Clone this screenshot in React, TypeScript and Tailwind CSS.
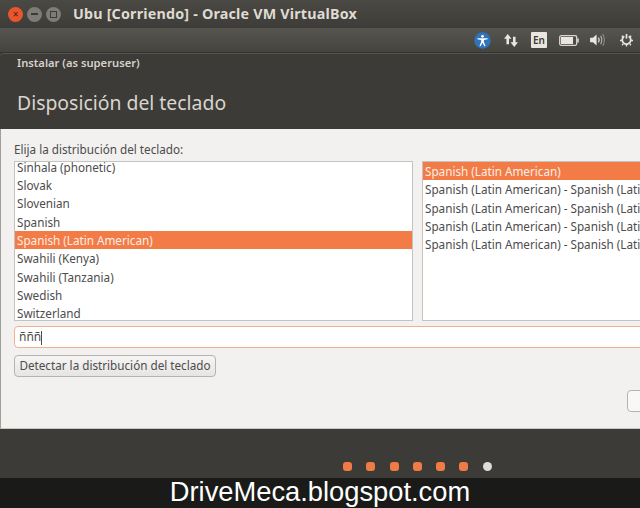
import React from 'react';

const font = { fontFamily: '"Noto Sans", "Open Sans", sans-serif' };

const layouts = ['Sinhala (phonetic)', 'Slovak', 'Slovenian', 'Spanish', 'Spanish (Latin American)', 'Swahili (Kenya)', 'Swahili (Tanzania)', 'Swedish', 'Switzerland'];
const variants = ['Spanish (Latin American)', 'Spanish (Latin American) - Spanish (Latin American, no dead keys)', 'Spanish (Latin American) - Spanish (Latin American, dead keys)', 'Spanish (Latin American) - Spanish (Latin American, Sun dead keys)', 'Spanish (Latin American) - Spanish (Latin American, Dvorak)'];

const Row = ({ text, active }: { text: string; active: boolean }) => (
  <div className={`h-[18.35px] leading-[18px] whitespace-nowrap pl-[2px] text-[11.7px] ${active ? 'bg-[#f37b46] text-[#fbeee8]' : 'text-[#4c4c4c]'}`}>{text}</div>
);

const TrayIcons = () => (
  <div className="flex items-center justify-end h-full pr-[7px]">
    <svg width="17" height="17" viewBox="0 0 18 18">
      <circle cx="9" cy="9" r="8.7" fill="#2f74bd" />
      <circle cx="9" cy="4.6" r="1.5" fill="#fff" />
      <path d="M3.6 6.6 L14.4 6.6 L14.4 7.8 L10.5 8.6 L10.5 10.5 L12.2 14.8 L11 15.2 L9 11.4 L7 15.2 L5.8 14.8 L7.5 10.5 L7.5 8.6 L3.6 7.8 Z" fill="#fff" />
    </svg>
    <svg width="14" height="15" viewBox="0 0 15 16" className="ml-[13px]">
      <path d="M4 1 L8 6 L5.4 6 L5.4 12 L2.6 12 L2.6 6 L0 6 Z" fill="#e8e6df" />
      <path d="M11 15 L15 10 L12.4 10 L12.4 4 L9.6 4 L9.6 10 L7 10 Z" fill="#e8e6df" />
    </svg>
    <div className="w-[16px] h-[16px] ml-[13px] rounded-[1px] bg-[#e8e6df] text-[#3c3b37] text-[10px] leading-[16px] text-center font-semibold">En</div>
    <svg width="20" height="11" viewBox="0 0 20 11" className="ml-[12px]">
      <rect x="0.7" y="0.7" width="17" height="9.6" rx="1.5" fill="none" stroke="#d8d6cf" strokeWidth="1.3" />
      <rect x="2" y="2" width="12" height="7" fill="#e8e6df" />
      <rect x="18.2" y="3.5" width="1.6" height="4" fill="#d8d6cf" />
    </svg>
    <svg width="16" height="14" viewBox="0 0 17 15" className="ml-[11px]">
      <path d="M0 5 L3 5 L7 1.5 L7 13.5 L3 10 L0 10 Z" fill="#e8e6df" />
      <path d="M9 5 Q10.5 7.5 9 10" fill="none" stroke="#e8e6df" strokeWidth="1.3" />
      <path d="M11.3 3 Q13.8 7.5 11.3 12" fill="none" stroke="#bdbbb4" strokeWidth="1.1" />
      <path d="M13.6 1 Q17 7.5 13.6 14" fill="none" stroke="#8f8d87" strokeWidth="1.1" />
    </svg>
    <svg width="13" height="14" viewBox="0 0 14 14" className="ml-[14px]">
      <path d="M4.6 3 A4.6 4.6 0 1 0 9.4 3" fill="none" stroke="#e8e6df" strokeWidth="2" />
      <path d="M7 0.5 L7 5.5" stroke="#e8e6df" strokeWidth="1.8" />
      <path d="M0 7.5 L2 7.5 M12 7.5 L14 7.5 M2 2.5 L3.2 3.7 M12 2.5 L10.8 3.7 M2.2 12.6 L3.4 11.4 M11.8 12.6 L10.6 11.4 M7 12 L7 14" stroke="#e8e6df" strokeWidth="1.5" />
    </svg>
  </div>
);

export default function App() {
  return (
    <div className="w-[640px] h-[508px] overflow-hidden flex flex-col bg-[#3c3b37]" style={font}>
      {/* window title */}
      <div className="h-[28px] shrink-0 flex items-center bg-gradient-to-b from-[#4a4944] to-[#3d3c38] pl-[8px]">
        <div className="w-[15px] h-[15px] rounded-full bg-[#e9562b] flex items-center justify-center text-[#3c2015] text-[10px] leading-none">×</div>
        <div className="w-[15px] h-[15px] ml-[4px] rounded-full bg-[#7d7c76] flex items-center justify-center">
          <div className="w-[7px] h-[1.5px] bg-[#3c3b37]" />
        </div>
        <div className="w-[15px] h-[15px] ml-[4px] rounded-full bg-[#7d7c76] flex items-center justify-center">
          <div className="w-[7px] h-[7px] border border-[#3c3b37]" />
        </div>
        <div className="ml-[12px] text-[14.3px] font-bold tracking-[0.2px] text-[#dfdbd2] whitespace-nowrap">Ubu [Corriendo] - Oracle VM VirtualBox</div>
      </div>
      {/* top panel */}
      <div className="h-[25px] shrink-0 bg-gradient-to-b from-[#565550] to-[#45443f] border-b border-[#33322e]">
        <TrayIcons />
      </div>
      {/* dialog header */}
      <div className="h-[76px] shrink-0 bg-[#3c3b37] border-t border-[#55544f] pl-[17px] rounded-tl-[4px]">
        <div className="pt-[1px] text-[11.2px] leading-[16px] font-semibold text-[#d5d2ca]">Instalar (as superuser)</div>
        <div className="mt-[19px] text-[19.4px] leading-[26px] text-[#d8d5cd]">Disposición del teclado</div>
      </div>
      {/* dialog body */}
      <div className="h-[300px] shrink-0 bg-[#f2f1f0] border-l border-[#a09f9b] border-b border-b-[#c8c7c3] pl-[13px]">
        <div className="pt-[12px] h-[32px] text-[11.7px] leading-[16px] text-[#4c4c4c]">Elija la distribución del teclado:</div>
        <div className="flex gap-[9px] w-[700px]">
          <div className="w-[399px] h-[160px] shrink-0 overflow-hidden bg-white border border-[#c4c3bf]">
            <div className="-mt-[4.5px]">
              {layouts.map((l) => <Row key={l} text={l} active={l === 'Spanish (Latin American)'} />)}
            </div>
          </div>
          <div className="w-[280px] h-[160px] shrink-0 overflow-hidden bg-white border border-[#c4c3bf]">
            {variants.map((v, i) => <Row key={v} text={v} active={i === 0} />)}
          </div>
        </div>
        <div className="mt-[5px] w-[700px] h-[22px] rounded-[4px] bg-white border border-[#efb08f] pl-[4px] text-[12px] leading-[20px] text-[#4c4c4c]">
          ñññ<span className="inline-block w-px h-[14px] align-middle bg-[#4c4c4c]" />
        </div>
        <div className="mt-[7px] w-[202px] h-[22px] rounded-[4px] border border-[#b5b4b0] bg-gradient-to-b from-[#f6f5f4] to-[#e6e5e3] text-center text-[11.7px] leading-[19px] text-[#4c4c4c] whitespace-nowrap">Detectar la distribución del teclado</div>
        <div className="mt-[13px] ml-[613px] w-[40px] h-[22px] rounded-[4px] border border-[#b5b4b0] bg-[#f8f8f7]" />
      </div>
      {/* footer with progress dots */}
      <div className="h-[49px] shrink-0 bg-[#3c3b37] flex items-end pb-[7px] pl-[343px] gap-[14.25px]">
        {[0, 1, 2, 3, 4, 5].map((i) => <div key={i} className="w-[9px] h-[9px] rounded-[3px] bg-[#ef7b45]" />)}
        <div className="w-[9px] h-[9px] rounded-full bg-[#dcdcdc]" />
      </div>
      {/* blog watermark */}
      <div className="h-[30px] shrink-0 bg-[#1a1a18] text-center text-white text-[27.3px] leading-[27px] whitespace-nowrap" style={{ fontFamily: '"Liberation Sans", Arial, sans-serif' }}>DriveMeca.blogspot.com</div>
    </div>
  );
}
